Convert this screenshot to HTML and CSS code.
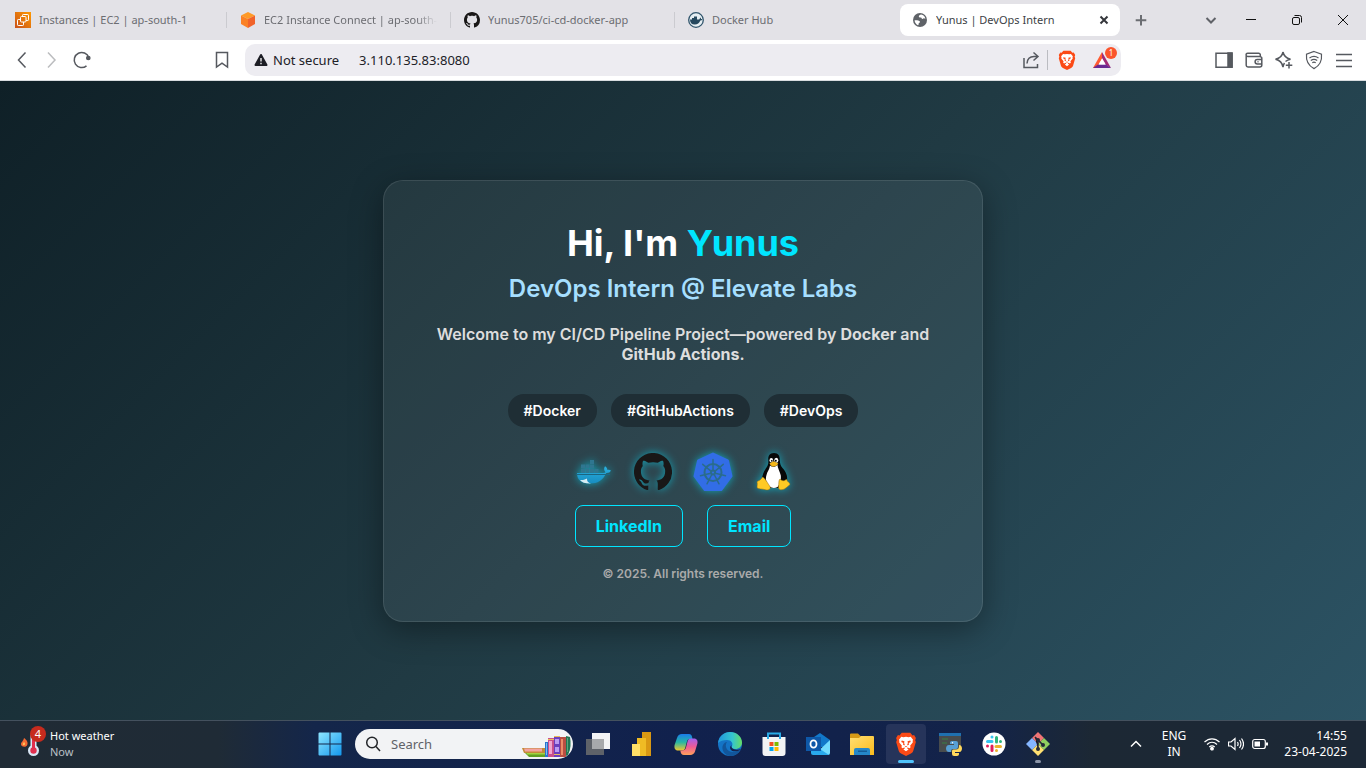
FILE: index.html
```html
<!DOCTYPE html>
<html lang="en">
<head>
<meta charset="utf-8">
<meta name="viewport" content="width=device-width, initial-scale=1">
<title>Yunus | DevOps Intern</title>
<link rel="stylesheet" href="styles.css">
</head>
<body>
<svg class="defs" aria-hidden="true">
  <defs>
    <symbol id="octocat" viewBox="0 0 16 16"><path d="M8 0C3.58 0 0 3.58 0 8c0 3.54 2.29 6.53 5.47 7.59.4.07.55-.17.55-.38 0-.19-.01-.82-.01-1.49-2.01.37-2.53-.49-2.69-.94-.09-.23-.48-.94-.82-1.13-.28-.15-.68-.52-.01-.53.63-.01 1.08.58 1.23.82.72 1.21 1.87.87 2.33.66.07-.52.28-.87.51-1.07-1.78-.2-3.64-.89-3.64-3.95 0-.87.31-1.59.82-2.15-.08-.2-.36-1.02.08-2.12 0 0 .67-.21 2.2.82.64-.18 1.32-.27 2-.27s1.36.09 2 .27c1.53-1.04 2.2-.82 2.2-.82.44 1.1.16 1.92.08 2.12.51.56.82 1.27.82 2.15 0 3.07-1.87 3.75-3.65 3.95.29.25.54.73.54 1.48 0 1.07-.01 1.93-.01 2.2 0 .21.15.46.55.38A8.01 8.01 0 0 0 16 8c0-4.42-3.58-8-8-8z"/></symbol>
    <symbol id="lion" viewBox="0 0 24 28">
      <path fill="#fb4a16" d="M7 1h10l2.600 3 1.800-.4L23.500 7l-.8 2.500.8 2.200-3 10.300c-.6 1.600-1.500 2.400-2.700 3.200L12 28l-5.800-2.800C5 24.400 4.100 23.600 3.500 22L.5 11.700l.8-2.200L.5 7l2.100-3.400 1.800.4z"/>
      <path fill="#fff" d="M12 5.500l3 .6 2.500-.5 2.700 3.300-.5 1.500.3 1.500-3.200 4 .6 1.900-1.400 1.200-1.900-1-1.100.8 2 1.500L12 22.600 9 20.300l2-1.500-1.100-.8-1.900 1-1.400-1.200.6-1.900-3.200-4 .3-1.500-.5-1.500 2.700-3.300 2.500.5z"/>
      <path fill="#fb4a16" d="M7 10l3.200.7-.4 2 .8 2.300-.6.700-1.500-1.100.4-1.700-2.400-1.300zM17 10l-3.200.7.4 2-.8 2.300.6.700 1.500-1.100-.4-1.700 2.400-1.300zM10.500 16.800l1.500-.6 1.500.6-1.500 1.100z"/>
    </symbol>
    <linearGradient id="amber" x1="0" y1="1" x2="1" y2="0"><stop offset="0" stop-color="#c8511b"/><stop offset="1" stop-color="#ff9900"/></linearGradient>
    <linearGradient id="win" x1="0" y1="0" x2="1" y2="1"><stop offset="0" stop-color="#8ee6ff"/><stop offset="1" stop-color="#1398ee"/></linearGradient>
    <linearGradient id="edgeA" x1="0" y1="0" x2="1" y2="0"><stop offset="0" stop-color="#2196dc"/><stop offset=".6" stop-color="#35c6cf"/><stop offset="1" stop-color="#66dc63"/></linearGradient>
    <linearGradient id="cpA" x1="0" y1="0" x2="0" y2="1"><stop offset="0" stop-color="#1a7bea"/><stop offset=".5" stop-color="#26b7a4"/><stop offset="1" stop-color="#f1c92e"/></linearGradient>
    <linearGradient id="cpB" x1="0" y1="0" x2="0" y2="1"><stop offset="0" stop-color="#a060ee"/><stop offset=".5" stop-color="#ee5a95"/><stop offset="1" stop-color="#ffa15a"/></linearGradient>
    <linearGradient id="folder" x1="0" y1="0" x2="1" y2="1"><stop offset="0" stop-color="#ffdf73"/><stop offset="1" stop-color="#fbbb1c"/></linearGradient>
    <linearGradient id="whale" x1="0" y1="0" x2="0" y2="1"><stop offset="0" stop-color="#2bb0df"/><stop offset="1" stop-color="#178cc0"/></linearGradient>
  </defs>
</svg>

<header class="browser">
  <div class="tabstrip">
    <nav class="tabs" aria-label="Tabs">
      <button class="tab"><svg class="i16" viewBox="0 0 16 16"><path fill="url(#amber)" d="M0 0h16v16H0z"/><g fill="none" stroke="#fff" stroke-width="1"><rect x="5.500" y="4.500" width="5.500" height="5.500" rx="1"/><path d="M7.500 4.500V3.200a.7.7 0 0 1 .7-.7h4.600a.7.700 0 0 1 .7.7v4.600a.7.700 0 0 1-.7.7H11M5.500 7.500H3.200a.7.700 0 0 0-.7.7v4.600a.7.700 0 0 0 .7.7h4.600a.7.700 0 0 0 .7-.7V10"/></g></svg><span>Instances | EC2 | ap-south-1</span></button>
      <button class="tab"><svg class="i16" viewBox="0 0 16 16"><path fill="#ff9a27" d="M8 0l7 3.500L8 7 1 3.500z"/><path fill="#fb8124" d="M1 3.500L8 7v9l-7-4z"/><path fill="#f1632a" d="M15 3.500L8 7v9l7-4z"/></svg><span class="fade">EC2 Instance Connect | ap-south-</span></button>
      <button class="tab"><svg class="i16 dark"><use href="#octocat"/></svg><span>Yunus705/ci-cd-docker-app</span></button>
      <button class="tab"><svg class="i16" viewBox="0 0 16 16"><circle cx="8" cy="8" r="7.300" fill="#e6eef2" stroke="#31556c" stroke-width="1.300"/><path fill="#26485e" d="M2 7.500h2V6h2V4.500h3V7.500h2c.8 0 .8-1.500 1.300-2 .8.600.7 1.200.6 1.600.5 0 1 0 1.400.3-.4.8-1 1.100-2 1.100C11.300 11.200 9.500 12.500 6.800 12.500 3.500 12.500 2 10.500 2 7.500z"/></svg><span>Docker Hub</span></button>
      <button class="tab active"><svg class="i16" viewBox="0 0 16 16"><circle cx="8" cy="8" r="7" fill="#5f6368"/><path fill="#fff" d="M9.200 2.600c-1.300.2-2.400.9-2.400 1.800 0 1.100 1.400 1 2.200 1.100.7.100.4 1.200 1.300 1.400.9.200 1.200-.7 2.100-.5l1 .3C12.900 4.500 11.200 2.900 9.200 2.600zM2.600 8.200c1.800 0 3.300.1 4.700.7 1.100.6.900 1.500 0 1.800-.6.200-.6.600-.6 1.200 0 .7-.3 1.100-.7 1.300C4.200 12.300 2.700 10.500 2.600 8.200z"/></svg><span>Yunus | DevOps Intern</span><svg class="i10 close" viewBox="0 0 10 10"><path d="M1.500 1.500l7 7M8.500 1.500l-7 7"/></svg></button>
    </nav>
    <button class="newtab" aria-label="New tab"><svg class="i16" viewBox="0 0 16 16"><path d="M8 3v10.500M2.700 8.200h10.600"/></svg></button>
    <div class="window-controls">
      <button aria-label="Search tabs"><svg class="i16 soft" viewBox="0 0 16 16"><path d="M3.500 6L8 10.500 12.500 6"/></svg></button>
      <button aria-label="Minimize"><svg class="i16" viewBox="0 0 16 16"><path d="M3 7.500h10"/></svg></button>
      <button aria-label="Restore"><svg class="i16" viewBox="0 0 16 16"><rect x="3.500" y="5.500" width="7" height="7" rx="1.500"/><path d="M5.500 3.500h5a2 2 0 0 1 2 2v5"/></svg></button>
      <button aria-label="Close window"><svg class="i16" viewBox="0 0 16 16"><path d="M3 3l10 10M13 3L3 13"/></svg></button>
    </div>
  </div>

  <div class="toolbar">
    <div class="nav-buttons">
      <button aria-label="Back"><svg class="i20" viewBox="0 0 20 20"><path d="M13.500 2.500L6.500 10l7 7.500"/></svg></button>
      <button aria-label="Forward" class="off"><svg class="i20" viewBox="0 0 20 20"><path d="M6 2.500l7 7.500-7 7.500"/></svg></button>
      <button aria-label="Reload"><svg class="i20" viewBox="0 0 20 20"><path d="M14.500 15.800A7.500 7.500 0 1 1 16.800 7.500"/><circle cx="16.300" cy="8" r="1.600" fill="#56595f"/></svg></button>
      <button aria-label="Bookmark" class="bookmark"><svg class="i20" viewBox="0 0 20 20"><path d="M4.500 2.500h11V17L10 13.200 4.500 17z"/></svg></button>
    </div>
    <div class="address">
      <button class="security"><svg class="i16" viewBox="0 0 16 16"><path fill="#1d1e25" stroke="#1d1e25" stroke-linejoin="round" stroke-width="2" d="M8 3l5.500 10h-11z"/><path stroke="#fff" stroke-width="1.300" d="M8 6v3.500M8 10.800v1.400"/></svg>Not secure</button>
      <input type="text" aria-label="Address" value="3.110.135.83:8080">
      <button aria-label="Share" class="share"><svg class="i20" viewBox="0 0 20 20"><path d="M3 8v9.500h13.500V14M6 13.500c.3-4.500 3-7 7-7h3M12.500 2.500l4.500 4-4.500 4"/></svg></button>
      <button aria-label="Brave Shields" class="shields"><svg class="i20"><use href="#lion"/></svg></button>
      <button aria-label="Brave Rewards" class="rewards"><svg class="i20" viewBox="0 0 20 20"><path fill="#ff5a32" d="M10 2L1 18h4l5-9z"/><path fill="#a22b77" d="M10 2l9 16-5-3-4-7z"/><path fill="#6a2a92" d="M1 18h18l-5-3.500H6z"/><path fill="#fff" d="M10 8.500l3.500 6h-7z"/></svg><span class="count">1</span></button>
    </div>
    <div class="tools">
      <button aria-label="Sidebar"><svg class="i20" viewBox="0 0 20 20"><path d="M2 3.200h16v14H2z"/><path fill="#56595f" d="M14 3h4v14h-4z"/></svg></button>
      <button aria-label="Wallet"><svg class="i20" viewBox="0 0 20 20"><path d="M2.200 5.200V15a2 2 0 0 0 2 2h11.600a2 2 0 0 0 2-2V8.500a2 2 0 0 0-2-2H3.700a1.600 1.600 0 0 1 0-3.300h11a1.600 1.600 0 0 1 1.600 1.600v1.700M17.800 9.500h-4.500a2.200 2.200 0 0 0 0 4.400h4.500"/><path d="M13.500 11.700h1"/></svg></button>
      <button aria-label="Leo AI"><svg class="i20" viewBox="0 0 20 20"><path d="M9 2c.8 4 2.400 6 7.500 7.200-2.200.5-3.800 1.300-5 2.300M9 2C8.200 6.200 6.300 8.300 1.500 9.300 6.300 10.300 8.200 12.500 9 17c.3-1.700.8-3 1.500-4"/><path d="M15 12v6.500M11.800 15.200h6.500"/></svg></button>
      <button aria-label="VPN"><svg class="i20 thin" viewBox="0 0 20 20"><path d="M10 1.500l7.500 2.600c.6 6-.8 11-7.500 14.500C3.300 15 1.900 10 2.500 4.100z"/><path d="M5.500 8c2.800-2 6.200-2 9 0M6.800 10.500c2-1.300 4.400-1.300 6.400 0M8.300 12.800c1-.7 2.300-.7 3.400 0"/></svg></button>
      <button aria-label="Menu"><svg class="i20" viewBox="0 0 20 20"><path d="M2 4.500h16M2 10.500h16M2 16.500h16"/></svg></button>
    </div>
  </div>
</header>

<main class="page">
  <section class="card">
    <h1>Hi, I'm <span>Yunus</span></h1>
    <h2>DevOps Intern @ Elevate Labs</h2>
    <p class="intro">Welcome to my CI/CD Pipeline Project—powered by <strong>Docker</strong> and <strong>GitHub Actions</strong>.</p>
    <ul class="tags"><li>#Docker</li><li>#GitHubActions</li><li>#DevOps</li></ul>
    <div class="stack">
      <svg viewBox="0 0 40 40" role="img" aria-label="Docker">
        <path fill="#2f7690" d="M8 17h4v4H8zM12.500 17h4v4h-4zM17 17h4v4h-4zM21.500 17h4v4h-4zM12.500 12.500h4v4h-4zM17 12.500h4v4h-4zM8 12.500h4v4H8zM17 8h4v4h-4z"/>
        <path fill="url(#whale)" d="M4 21h26c1.200 0 2-.3 2.500-.8-1.700-1.600-1.800-4-.5-5.900 1.600 1 2.500 2.300 2.400 3.700 1.300-.4 2.700-.2 3.600.5-.8 1.800-2.300 2.600-4.700 2.500-3.300 7.400-8.800 10.500-16.300 10.500C8 31.500 4 27.500 4 21z"/>
        <path fill="#d5edf3" d="M7 28c3.500.2 5.600-.5 7-1.500-.2 2.500 1 4.300 4 5C12.500 31.700 9 30.500 7 28z"/><path d="M3 22.500h34" stroke="#1b6580"/>
      </svg>
      <svg viewBox="-1 -1 42 42" role="img" aria-label="GitHub" class="dark"><use href="#octocat" width="40" height="40"/></svg>
      <svg viewBox="0 0 40 40" role="img" aria-label="Kubernetes">
        <path fill="#326de6" stroke="#326de6" stroke-width="3" stroke-linejoin="round" d="M20 2l14.500 6.800 3.500 15.400-10 13.300H12L2 24.200 5.500 8.800z"/>
        <g fill="none" stroke="#2a6c8c" stroke-linecap="round"><circle cx="20" cy="20.500" r="8.500" stroke-width="2"/><circle cx="20" cy="20.500" r="2" stroke-width="2"/><path stroke-width="1.500" d="M20 18V7.500M22 19.200l8.300-6.900M22.300 21.300l10.200 2.400M21.200 22.500l4.800 9.300M18.800 22.500L14 31.800M17.700 21.300L7.500 23.700M18 19.200l-8.300-6.900"/></g>
      </svg>
      <svg viewBox="0 0 40 40" role="img" aria-label="Linux">
        <path fill="#080808" d="M21 1c-4.500 0-6 3.200-5.700 7 .3 4.200-.3 5.300-2.500 8.500C10.500 20 8.500 25 9 29l5 7h14l6-7c1-5-1.300-9.500-4.500-13-2-2.300-2.500-4.300-2.700-8C26.800 4 25.500 1 21 1z"/>
        <path fill="#fff" d="M17 13.500c2.500 2 4.700 1.600 7.500-.6 0 3 2.500 6.600 3.300 10.600.5 4-.7 9-3.300 11.500-3 1.500-6 1-8-.5-3-3-4.500-7-3-11.500C14.300 19.500 16.500 17.500 17 13.500z"/>
        <ellipse cx="18.300" cy="8.300" rx="1.800" ry="2.300" fill="#fff"/><ellipse cx="23.300" cy="8.300" rx="2" ry="2.500" fill="#fff"/><circle cx="18.800" cy="8.800" r=".9"/><circle cx="22.800" cy="8.800" r="1"/>
        <path fill="#f5b719" d="M16.500 11.500l4-2.300 4.800 2.400c-1.300 2.200-3 3-4.600 3-2 0-3.300-1.100-4.200-3.100z"/>
        <path fill="#ffca24" stroke="#8f6910" stroke-width=".5" d="M9.500 25c2.500 1 5 6 7.500 9.500 1.300 2.500-1.500 4-4.500 3.300-3.800-1.200-7-.6-8.300-1.800-.5-1.500.5-3.500-.2-6C4.500 28.500 7.500 29 9.500 25zM27 27c2 2 4.500 2.500 6.500 0 .5 3 4.200 4 3.500 5.500-2.500 2-5 5-8 5.300-2.200.3-4-.8-3.500-3.300.5-2.800 0-6.500 1.500-7.500z"/>
      </svg>
    </div>
    <div class="links"><a href="#linkedin">LinkedIn</a><a href="#email">Email</a></div>
    <p class="copy">© 2025. All rights reserved.</p>
  </section>
</main>

<footer class="taskbar">
  <button class="weather">
    <span class="weather-icon"><svg viewBox="0 0 28 28"><path fill="#f36a32" d="M4 8c3 2 4.500 5 3 7.500-1.500 2-5.500 1.500-6-1C.7 12.500 3.500 11 4 8z"/><path fill="#ffc55a" d="M4 12c1.500 1 1.500 3-.2 3.300C2 15 3 13.500 4 12z"/><rect x="10.500" y="3" width="6" height="19" rx="3" fill="#d9e7f5"/><circle cx="13.500" cy="20.500" r="5.500" fill="#d9e7f5"/><path d="M13.500 9v11" stroke="#e02f4e" stroke-width="3"/><circle cx="13.500" cy="20.500" r="3.200" fill="#e02f4e"/></svg><span class="alert">4</span></span>
    <span class="lines"><span>Hot weather</span><span class="dim">Now</span></span>
  </button>
  <div class="apps">
    <button aria-label="Start"><svg viewBox="0 0 24 24"><path fill="url(#win)" d="M1.500.5h10v11h-11v-10a1 1 0 0 1 1-1zM12.500.5h10a1 1 0 0 1 1 1v10h-11zM.5 12.500h11v11h-10a1 1 0 0 1-1-1zM12.500 12.500h11v10a1 1 0 0 1-1 1h-10z"/></svg></button>
    <label class="search"><svg class="i16" viewBox="0 0 16 16"><circle cx="7" cy="6.500" r="5.300"/><path d="M11 10.500l4 4.500"/></svg><input type="search" placeholder="Search" aria-label="Search">
      <svg class="books" viewBox="0 0 50 24"><path fill="#5f9e24" d="M3 18h21v5H8z"/><path fill="#a2d441" d="M5 18h19v2.500H6z"/><path fill="#c38a38" d="M1 14h23v5H3z"/><path fill="#f3a1a0" d="M3 14.500h18v3H4z"/><path fill="#2874cf" d="M24 8h3v15h-3z"/><path fill="#7fb7f2" d="M25 9h1v12h-1z"/><path fill="#c94f8d" d="M27 4h6v19h-6z"/><path fill="#f2a5ce" d="M28 7h3v13h-3z"/><path fill="#6b3fbc" d="M33 2h6v21h-6z"/><path fill="#bb9af2" d="M34 5h4v5h-4zM34 13h4v5h-4z"/><path fill="#e9bd58" d="M33 2h6v1h-6zM33 20h6v1h-6zM27 5h6v1h-6z"/><path fill="#b94e43" d="M39 3h6v20h-6z"/><path fill="#ed8c68" d="M40 5h2v16h-2z"/><path fill="#237654" d="M45 2l4 1c1 6 1 12-2 18l-2 1z"/><path fill="#58a77e" d="M46 4h1v14h-1z"/></svg></label>
    <button aria-label="Task view"><svg viewBox="0 0 24 24"><path fill="#f2f3f5" d="M6 1h18v16H6z"/><path fill="#5e6269" d="M0 7h18v16H0z"/><path fill="#a7a9ac" d="M6 7h12v10H6z"/></svg></button>
    <button aria-label="Power BI"><svg viewBox="0 0 24 24"><path fill="#d99813" d="M12 0h9v24h-9z"/><path fill="#efbb24" d="M7 6h9v18H7z"/><path fill="#ffdf67" d="M2 12h8v12H2z"/></svg></button>
    <button aria-label="Copilot"><svg viewBox="0 0 24 24"><path fill="url(#cpA)" d="M8 2h7c2 0 2.800 1.300 3.200 3.500L18.500 7H16c-2 0-2.700 1-3.200 3l-1.600 6c-.7 2-1.500 2.500-3.200 2.500H4c-3 0-4-2.500-3.400-5.500L3 6C3.800 3.200 5.300 2 8 2z"/><path fill="url(#cpB)" d="M17 6.500h3c3 0 4 2.500 3.400 5L21 19.500c-.8 2.300-2.300 3.500-4.700 3.500H10c-2.200 0-3.200-1.500-3.700-4.500H8c2.400 0 3.500-1 4-3l1.500-6c.5-2 1.500-3 3.500-3z"/></svg></button>
    <button aria-label="Edge"><svg viewBox="0 0 24 24"><circle cx="12" cy="12" r="12" fill="#1474c6"/><path fill="url(#edgeA)" d="M0 11C1 4 6 0 12 0c7 0 12 5 12 10.500 0 4-3 6.500-7 6.500-3 0-4-1.500-3-3 1.500-3-1-6-5-6-4 0-7 1-9 3z"/><path fill="#12569b" d="M9 10c-3 4 0 10 6 10 3 0 5-.8 8-3-2 4.500-6 7-11 7C6 23 3 17 5 13c1-2 2.500-3 4-3z"/><path fill="#14254f" d="M13.500 13c-1 2.500 1.500 4.700 5 4.700 1.700 0 3.400-.4 5-1.200-2.500 2.500-5 3.200-8 2.700-3.500-.5-4.500-4-2-6.200z"/></svg></button>
    <button aria-label="Microsoft Store"><svg viewBox="0 0 24 24"><path fill="none" stroke="#29abe8" stroke-width="2" d="M6 8V1.500h12V8"/><path fill="#f2f3f4" d="M.5 5h23v16a3 3 0 0 1-3 3h-17a3 3 0 0 1-3-3z"/><path fill="#f25022" d="M7.500 10h4v4h-4z"/><path fill="#7fba00" d="M12.500 10h4v4h-4z"/><path fill="#00a4ef" d="M7.500 15h4v4h-4z"/><path fill="#ffb900" d="M12.500 15h4v4h-4z"/><path stroke="#29abe8" stroke-width="2" d="M6 5v2M18 5v2"/></svg></button>
    <button aria-label="Outlook"><svg viewBox="0 0 24 24"><path fill="#1178ca" d="M5 7l9-6 10 7-4 7H5z"/><path fill="#72dcff" d="M24 8v13a2 2 0 0 1-2 2H8z"/><path fill="#29a9ec" d="M5 11l18 12H7a2 2 0 0 1-2-2z"/><path fill="#0e58a8" d="M0 5h15v14H0z"/><ellipse cx="7.500" cy="12" rx="3" ry="3.700" fill="none" stroke="#fff" stroke-width="1.800"/></svg></button>
    <button aria-label="File Explorer"><svg viewBox="0 0 24 24"><path fill="#d69a16" d="M0 2.500a1 1 0 0 1 1-1h7l3 3v4H0z"/><path fill="url(#folder)" d="M0 6h9l2-2h12a1 1 0 0 1 1 1v18H0z"/><path fill="#2587c8" d="M4 23v-5a2 2 0 0 1 2-2h12a2 2 0 0 1 2 2v5z"/><path fill="#145c97" d="M8 18.500h9v1.500H8z"/></svg></button>
    <button aria-label="Brave" class="running current"><svg><use href="#lion"/></svg></button>
    <button aria-label="Python"><svg viewBox="0 0 24 24"><path fill="#484c4d" d="M1 1h22v19H1z"/><path fill="#1f70af" d="M1 1h22v3H1z"/><path stroke="#397f45" d="M4 7h6M4 11h5"/><path fill="#579fd5" d="M14 9h4a2 2 0 0 1 2 2v4a2 2 0 0 1-2 2h-3a2 2 0 0 0-2 2v1h-2c-4 0-4-7 0-7h5v-1h-4v-1c0-1.300.7-2 2-2z"/><path fill="#ffd85b" d="M21 13c4 0 4 7 0 7h-4v1h4v1c0 1.300-.7 2-2 2h-3a2 2 0 0 1-2-2v-3a1.500 1.500 0 0 1 1.500-1.500H18a3 3 0 0 0 3-3z"/><circle cx="14.500" cy="10.800" r=".7" fill="#fff"/></svg></button>
    <button aria-label="Slack"><svg viewBox="0 0 24 24"><circle cx="12" cy="12" r="11.500" fill="#fff"/><g fill="none" stroke-width="3" stroke-linecap="round"><path stroke="#36c5f0" d="M10 5v.1M5.500 9.500H10"/><path stroke="#2eb67d" d="M14.500 5.500V10M18.500 9.500v.1"/><path stroke="#ecb22e" d="M14 14.500h4.500M14.500 18.500v.1"/><path stroke="#e01e5a" d="M10 14v4.500M5.500 14v.1"/></g></svg></button>
    <button aria-label="Git Bash" class="running"><svg viewBox="0 0 24 24"><path fill="#f07475" d="M12 0l6 6-6 6-6-6z"/><path fill="#85b6ff" d="M6 6l6 6-6 6-6-6z"/><path fill="#90cf60" d="M18 6l6 6-6 6-6-6z"/><path fill="#ffe071" d="M12 12l6 6-6 6-6-6z"/><path stroke="#252a37" stroke-width="1.600" d="M9 5l3 3v9M12 8l5 5"/><g fill="#252a37"><circle cx="12" cy="8" r="2"/><circle cx="12" cy="17" r="2"/><circle cx="17" cy="13" r="2"/></g></svg></button>
  </div>
  <div class="tray">
    <button aria-label="Show hidden icons"><svg class="i16" viewBox="0 0 16 16"><path stroke-width="1.500" d="M3 10.500l5-5 5 5"/></svg></button>
    <button class="language lines"><span>ENG</span><span>IN</span></button>
    <button class="status" aria-label="Network, volume and battery">
      <svg class="i16" viewBox="0 0 16 16"><path d="M.5 6c4.500-4.300 10.500-4.300 15 0M3 8.500c3-2.800 7-2.800 10 0M5.300 11c1.700-1.500 3.700-1.500 5.400 0"/><circle cx="8" cy="12.700" r="1.300" fill="#fff"/></svg>
      <svg class="i16" viewBox="0 0 16 16"><path d="M.5 6v4H3l4 3.500v-11L3 6zM9.500 6c.8 1.300.8 2.700 0 4M11.500 4c1.800 2.500 1.800 5.500 0 8M13.500 2.500c2.600 3.500 2.600 7.500 0 11"/></svg>
      <svg class="i16" viewBox="0 0 16 16"><rect x=".7" y="3.500" width="12.600" height="9" rx="2"/><path fill="#fff" stroke="none" d="M2.500 5.500H8v5H2.500z"/><path stroke-width="2" d="M15 6.500v3"/></svg>
    </button>
    <button class="clock lines"><span>14:55</span><span>23-04-2025</span></button>
  </div>
</footer>
</body>
</html>
```
FILE: styles.css
```css
* { box-sizing: border-box; }

body {
  margin: 0;
  min-height: 100vh;
  display: flex;
  flex-direction: column;
  font-family: "Noto Sans", "Open Sans", sans-serif;
  font-size: 11px;
  line-height: 16px;
}

button, input { font: inherit; color: inherit; }
button { display: flex; align-items: center; justify-content: center; padding: 0; border: 0; background: none; flex: none; }
input { border: 0; background: none; outline: 0; padding: 0; min-width: 0; }
svg { display: block; flex: none; }

.defs { position: absolute; width: 0; height: 0; }
.i10 { width: 10px; height: 10px; }
.i16 { width: 16px; height: 16px; }
.i20 { width: 20px; height: 20px; }
.dark { fill: #191717; }

/* Browser frame */
.tabstrip { display: flex; align-items: center; height: 40px; background: #e3e2e7; }
.tabs { display: flex; gap: 4px; padding-left: 4px; min-width: 0; }
.tab {
  position: relative;
  width: 220px;
  flex: 0 1 auto;
  min-width: 0;
  height: 32px;
  padding: 0 11px;
  gap: 8px;
  justify-content: flex-start;
  color: #6c6d72;
  border-radius: 8px;
}
.tab:nth-child(n+2) { padding-left: 12px; }
.tab span { flex: 1; min-width: 0; overflow: hidden; white-space: nowrap; text-align: left; }
.tab .fade { mask-image: linear-gradient(90deg, #000 88%, transparent); }
.tab:nth-child(-n+3)::after { content: ""; position: absolute; right: -3px; top: 8px; width: 1px; height: 16px; background: #cbcbd0; }
.tab.active { background: #fff; color: #3d3f45; }
.close { stroke: #34363b; stroke-width: 2; }
.newtab { width: 42px; height: 32px; }
.newtab svg { stroke: #6b6d72; stroke-width: 2; fill: none; }
.window-controls { display: flex; margin-left: auto; }
.window-controls button { width: 46px; height: 40px; }
.window-controls button:first-child { width: 34px; }
.window-controls svg { fill: none; stroke: #111; stroke-width: 1; }
.window-controls .soft { stroke: #606268; stroke-width: 2; }

.toolbar {
  display: grid;
  grid-template-columns: 245px minmax(0, 1fr) 245px;
  align-items: center;
  height: 41px;
  background: #fff;
  border-bottom: 1px solid #d8dcdf;
}
.nav-buttons, .tools { display: flex; align-items: center; }
.nav-buttons { padding: 0 8px 0 7px; }
.nav-buttons button, .tools button { width: 30px; height: 30px; }
.nav-buttons .bookmark { margin-left: auto; }
.nav-buttons .off { opacity: .4; }
.nav-buttons svg, .tools svg, .share svg { fill: none; stroke: #56595f; stroke-width: 1.500; }
.tools .thin { stroke-width: 1.200; }
.tools { justify-content: flex-end; padding-right: 7px; }
.address { display: flex; align-items: center; height: 32px; padding: 0 4px 0 8px; border-radius: 10px; background: #edecf1; font-size: 13px; color: #202127; }
.security { gap: 4px; margin-right: 20px; }
.address input { flex: 1; }
.share { padding-right: 6px; border-right: 1px solid #bbbcc1; }
.shields { padding: 0 10px 0 9px; }
.rewards { position: relative; width: 30px; }
.count { position: absolute; right: 0; top: -3px; width: 12px; height: 12px; border-radius: 6px; background: #fb542b; color: #fff; font-size: 8px; line-height: 12px; text-align: center; }

/* Page */
.page {
  flex: 1;
  display: flex;
  align-items: center;
  justify-content: center;
  padding: 16px;
  background: linear-gradient(135deg, #0f2027, #203a43, #2c5364);
  font-family: Inter, sans-serif;
}
.card {
  width: 100%;
  max-width: 600px;
  padding: 39px 40px;
  text-align: center;
  color: #fff;
  border: 1px solid rgba(255, 255, 255, .1);
  border-radius: 20px;
  background: rgba(255, 255, 255, .06);
  box-shadow: 0 8px 32px rgba(0, 0, 0, .37);
}
h1, h2, p, ul { margin: 0; padding: 0; }
h1 { font-size: 36px; line-height: 46px; font-weight: 700; }
h1 span { color: #00e5ff; }
h2 { margin-top: 8px; font-size: 24px; line-height: 30px; font-weight: 600; color: #a6dfff; }
.intro { margin-top: 20px; font-size: 16px; line-height: 20px; font-weight: 600; color: #ddd; }
.intro strong { font-weight: 700; }
.tags { display: flex; flex-wrap: wrap; justify-content: center; gap: 14px; margin-top: 30px; list-style: none; }
.tags li { padding: 8px 16px; border-radius: 16px; background: #1f2e35; font-size: 14px; line-height: 17px; font-weight: 600; }
.stack { display: flex; justify-content: center; gap: 20px; margin-top: 25px; }
.stack svg { width: 40px; height: 40px; overflow: visible; filter: drop-shadow(0 0 4px rgba(0, 229, 255, .6)); }
.links { display: flex; justify-content: center; gap: 24px; margin-top: 13px; }
.links a { padding: 10px 20px; border: 1px solid #00e5ff; border-radius: 8px; color: #00e5ff; font-size: 16px; line-height: 20px; font-weight: 700; text-decoration: none; }
.copy { margin-top: 19px; font-size: 12px; line-height: 16px; font-weight: 600; color: #aaa; }

/* Taskbar */
.taskbar {
  display: grid;
  grid-template-columns: 1fr auto 1fr;
  align-items: center;
  height: 48px;
  padding: 0 0 2px 2px;
  color: #fff;
  border-top: 1px solid #44515e;
  background: linear-gradient(90deg, #202b35 0, #1f2b36 16%, #14264a 23%, #11214d 50%, #132349 72%, #1c2834 80%, #1c2836 100%);
}
.lines { display: flex; flex-direction: column; align-items: flex-start; }
.dim { color: #bbc0c6; }
.weather { justify-self: start; gap: 2px; padding-left: 18px; }
.weather-icon { position: relative; }
.weather-icon svg { width: 28px; height: 28px; }
.alert { position: absolute; right: 2px; top: -4px; width: 16px; height: 16px; border-radius: 8px; background: #c62b1e; line-height: 16px; text-align: center; }
.apps { display: flex; align-items: center; gap: 4px; }
.apps button { position: relative; width: 40px; height: 40px; border-radius: 4px; }
.apps button svg { width: 24px; height: 24px; }
.apps .current { background: #26345a; }
.running::after { content: ""; position: absolute; left: 17px; bottom: 1px; width: 6px; height: 3px; border-radius: 2px; background: #8c95a8; }
.current::after { left: 12px; width: 16px; background: #50c3fb; }
.search { display: flex; align-items: center; gap: 10px; width: 218px; height: 30px; margin: 0 1px; padding-left: 10px; overflow: hidden; border-radius: 15px; background: #f2f3f5; color: #606268; font-size: 13px; }
.search .i16 { fill: none; stroke: #24262a; stroke-width: 1.500; }
.search input { flex: 1; }
.search input::placeholder { color: #606268; opacity: 1; }
.books { width: 50px; height: 24px; margin: 0 2px 1px 0; align-self: flex-end; }
.tray { display: flex; justify-content: flex-end; align-items: center; padding-right: 19px; font-size: 12px; }
.tray svg { fill: none; stroke: #fff; stroke-width: 1.200; }
.language { align-items: center; margin: 0 18px; }
.status { gap: 8px; margin-right: 16px; }
.clock { align-items: flex-end; }
```
